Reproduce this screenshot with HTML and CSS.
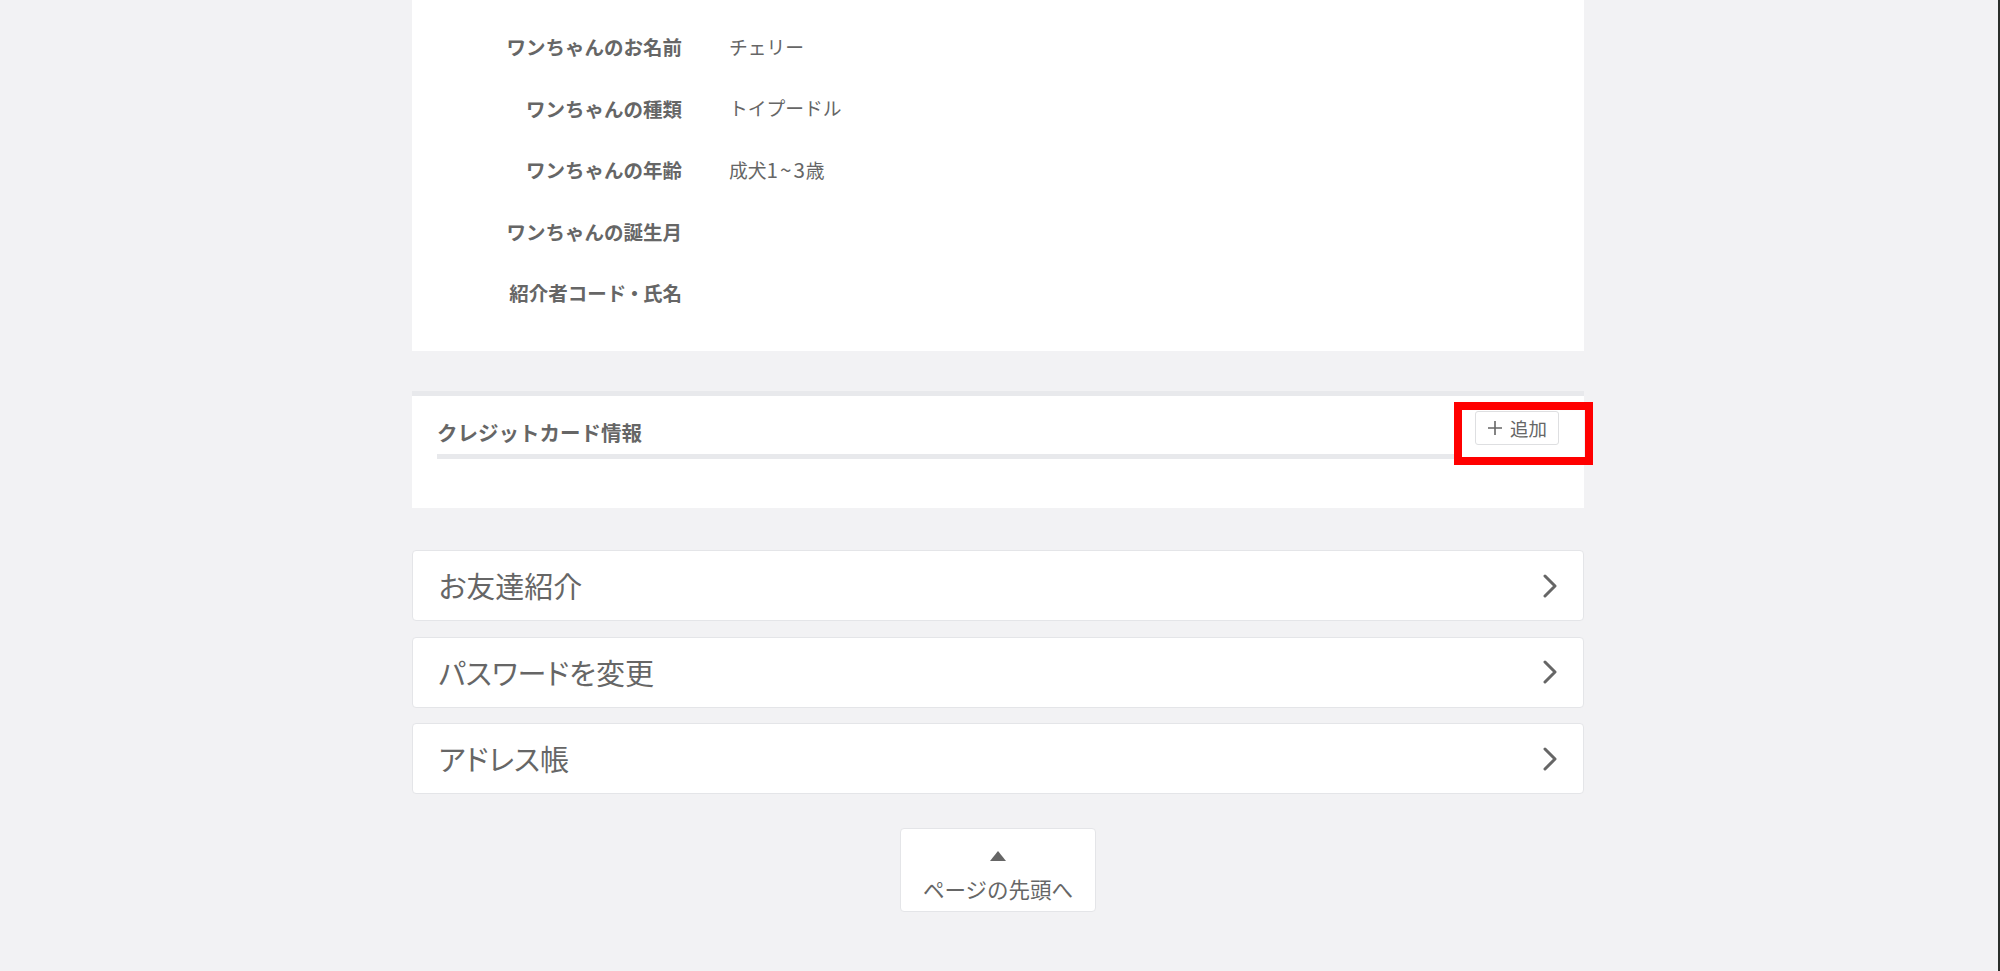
FILE: index.html
```html
<!DOCTYPE html>
<html lang="ja">
<head>
<meta charset="utf-8">
<title>マイページ</title>
<link rel="stylesheet" href="styles.css">
</head>
<body>
<div class="screen">
  <main class="page">
    <section class="panel profile">
      <dl class="info">
        <div class="row"><dt>ワンちゃんのお名前</dt><dd>チェリー</dd></div>
        <div class="row"><dt>ワンちゃんの種類</dt><dd>トイプードル</dd></div>
        <div class="row"><dt>ワンちゃんの年齢</dt><dd>成犬<span class="num">1~3</span>歳</dd></div>
        <div class="row"><dt>ワンちゃんの誕生月</dt><dd></dd></div>
        <div class="row"><dt>紹介者コード<span class="dot">・</span>氏名</dt><dd></dd></div>
      </dl>
    </section>

    <section class="panel card">
      <div class="card-head">
        <h2 class="card-title">クレジットカード情報</h2>
        <button class="add-btn" type="button">
          <svg class="plus" width="16" height="16" viewBox="0 0 16 16" aria-hidden="true">
            <path d="M8 1v14M1 8h14" stroke="#666" stroke-width="1.6" fill="none"/>
          </svg>
          <span>追加</span>
        </button>
      </div>
      <div class="highlight"></div>
    </section>

    <nav class="menu">
      <a class="menu-item" href="#">
        <span>お友達紹介</span>
        <svg class="chev" width="14" height="24" viewBox="0 0 14 24" aria-hidden="true"><path d="M2 2l10 10L2 22" stroke="#666" stroke-width="3" fill="none" stroke-linecap="round" stroke-linejoin="round"/></svg>
      </a>
      <a class="menu-item" href="#">
        <span>パスワードを変更</span>
        <svg class="chev" width="14" height="24" viewBox="0 0 14 24" aria-hidden="true"><path d="M2 2l10 10L2 22" stroke="#666" stroke-width="3" fill="none" stroke-linecap="round" stroke-linejoin="round"/></svg>
      </a>
      <a class="menu-item" href="#">
        <span>アドレス帳</span>
        <svg class="chev" width="14" height="24" viewBox="0 0 14 24" aria-hidden="true"><path d="M2 2l10 10L2 22" stroke="#666" stroke-width="3" fill="none" stroke-linecap="round" stroke-linejoin="round"/></svg>
      </a>
    </nav>

    <a class="to-top" href="#">
      <span class="tri"></span>
      <span class="to-top-text">ページの先頭へ</span>
    </a>
  </main>
  <div class="edge"></div>
</div>
</body>
</html>
```

FILE: styles.css
```css
* { box-sizing: border-box; }

html, body {
  margin: 0;
  padding: 0;
  height: 100%;
}

body {
  background: #f2f2f4;
  color: #666;
  font-family: "Noto Sans CJK JP", "Noto Sans", sans-serif;
  overflow: hidden;
}

.screen {
  display: flex;
  min-height: 971px;
}

.page {
  flex: 1;
  padding-right: 2px;
}

.edge {
  width: 2px;
  background: #2a2e2a;
}

.panel {
  width: 1172px;
  margin: 0 auto;
  background: #fff;
}

/* profile block */
.profile {
  padding: 16px 0 27.5px;
}

.info {
  margin: 0;
}

.row {
  display: grid;
  grid-template-columns: 270px 1fr;
  column-gap: 47px;
  height: 61.5px;
  align-items: center;
}

.row dt {
  text-align: right;
  font-size: 19.5px;
  font-weight: 700;
  line-height: 1.2;
  color: #666;
}

.row dd {
  margin: 0;
  font-size: 18.75px;
  line-height: 1.2;
  color: #666;
}

.dot {
  font-feature-settings: "halt";
  margin: 0 3.5px;
}

.num {
  font-size: 1.1em;
  letter-spacing: 2px;
  margin-right: -1px;
}

/* credit card block */
.card {
  position: relative;
  margin-top: 40px;
  border-top: 5px solid #e8e9ec;
  padding: 15px 25px 49px;
}

.card-head {
  display: flex;
  align-items: flex-start;
  gap: 20px;
}

.card-title {
  flex: 1;
  margin: 0;
  font-size: 20.5px;
  font-weight: 700;
  line-height: 43px;
  color: #666;
  border-bottom: 5px solid #e8e9ec;
}

.add-btn {
  width: 84px;
  height: 34px;
  border: 1px solid #dedfe1;
  border-radius: 3px;
  background: #fff;
  color: #666;
  font-family: inherit;
  font-size: 18.5px;
  line-height: 1;
  display: flex;
  align-items: center;
  justify-content: center;
  gap: 7px;
  padding: 0;
}

.plus {
  display: block;
}

.highlight {
  position: absolute;
  left: 1042px;
  top: 6px;
  width: 139px;
  height: 63px;
  border: 8px solid #ff0000;
  pointer-events: none;
}

/* menu */
.menu {
  width: 1172px;
  margin: 42px auto 0;
  display: flex;
  flex-direction: column;
  gap: 15.5px;
}

.menu-item {
  height: 71px;
  display: flex;
  align-items: center;
  justify-content: space-between;
  padding: 0 26px 0 25.5px;
  background: #fff;
  border: 1px solid #e4e5e8;
  border-radius: 4px;
  color: #666;
  text-decoration: none;
  font-size: 29px;
  line-height: 1;
  font-feature-settings: "palt";
}

.chev {
  display: block;
}

/* back to top */
.to-top {
  width: 196px;
  height: 84px;
  margin: 34px auto 0;
  display: flex;
  flex-direction: column;
  align-items: center;
  padding-top: 22px;
  background: #fff;
  border: 1px solid #e4e5e8;
  border-radius: 4px;
  color: #666;
  text-decoration: none;
}

.tri {
  width: 0;
  height: 0;
  border-left: 8.5px solid transparent;
  border-right: 8.5px solid transparent;
  border-bottom: 10px solid #666;
}

.to-top-text {
  margin-top: 13px;
  font-size: 21.5px;
  line-height: 30px;
}
```
